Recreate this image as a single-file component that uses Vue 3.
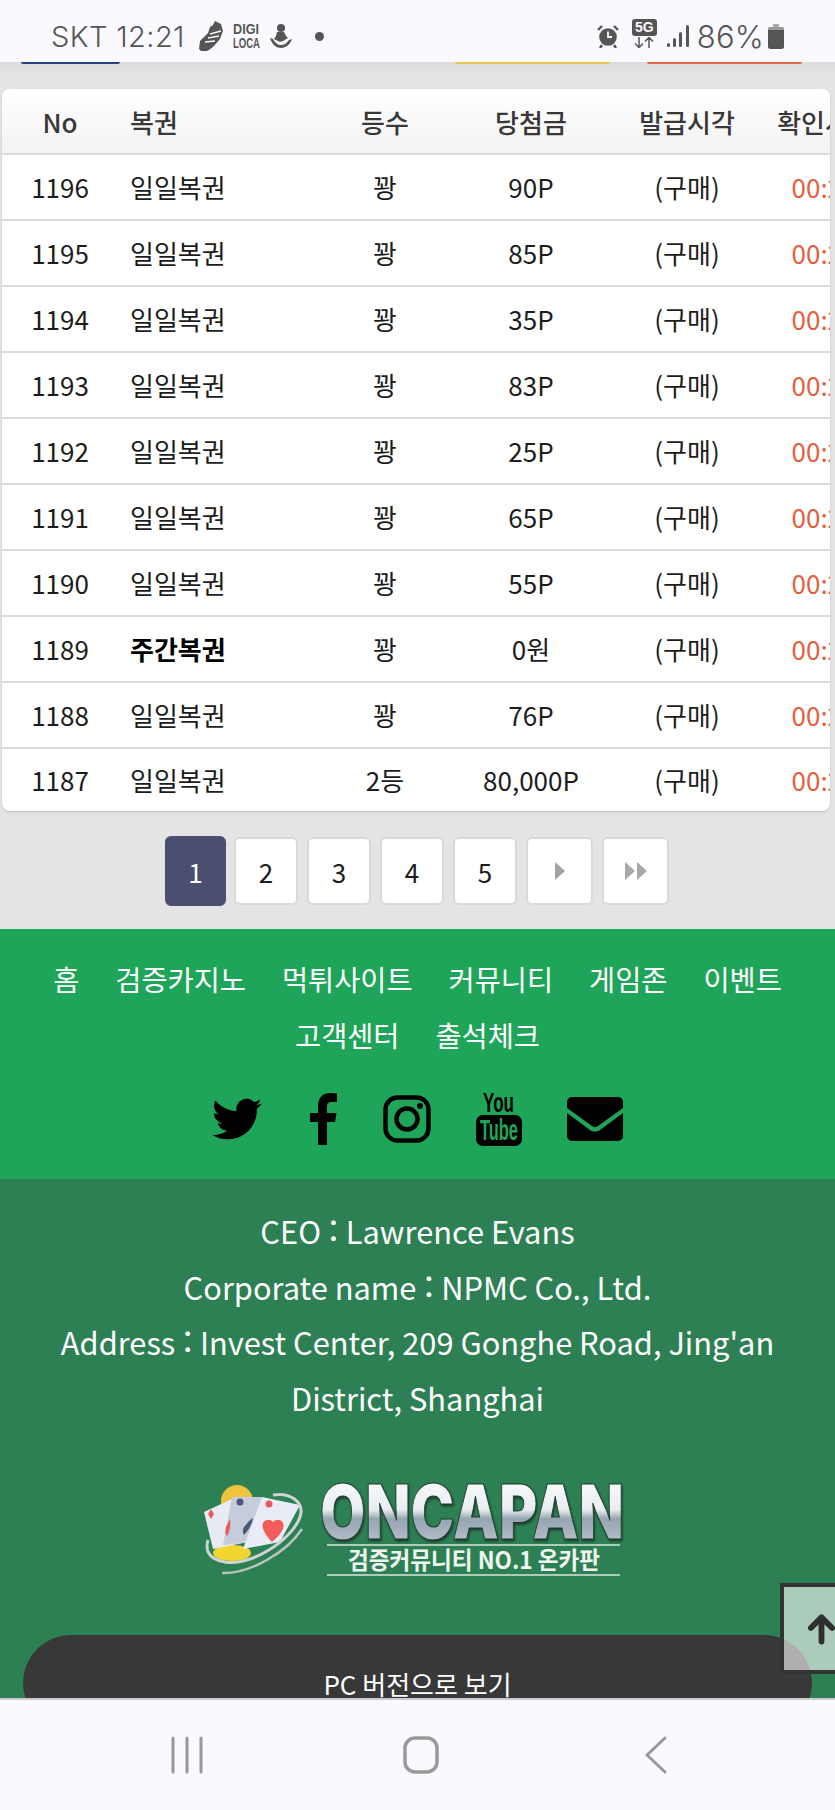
<script setup>
const rows = [
  { no: 1196, name: '일일복권', rank: '꽝', prize: '90P' },
  { no: 1195, name: '일일복권', rank: '꽝', prize: '85P' },
  { no: 1194, name: '일일복권', rank: '꽝', prize: '35P' },
  { no: 1193, name: '일일복권', rank: '꽝', prize: '83P' },
  { no: 1192, name: '일일복권', rank: '꽝', prize: '25P' },
  { no: 1191, name: '일일복권', rank: '꽝', prize: '65P' },
  { no: 1190, name: '일일복권', rank: '꽝', prize: '55P' },
  { no: 1189, name: '주간복권', rank: '꽝', prize: '0원', bold: true },
  { no: 1188, name: '일일복권', rank: '꽝', prize: '76P' },
  { no: 1187, name: '일일복권', rank: '2등', prize: '80,000P' }
]
const pages = [1, 2, 3, 4, 5]
const menu = ['홈', '검증카지노', '먹튀사이트', '커뮤니티', '게임존', '이벤트', '고객센터', '출석체크']
</script>

<template>
  <div class="phone">
    <div class="status">
      <div class="status-left">
        <span class="carrier">SKT 12:21</span>
        <svg viewBox="0 0 24 30" width="24" height="30">
          <path d="M16 0l6 3 2 7-3 8-6 7-5 4-2 1H2l-2-2 1-8 4-4 4-4 2-6 3-2z" fill="#555" />
          <path d="M11 13l11-3M9 17l11-2M6 21l10-1" stroke="#faf9fe" stroke-width="1.400" />
        </svg>
        <svg class="digi" viewBox="0 0 27 26" width="27" height="26">
          <text x="0" y="11" textLength="26" lengthAdjust="spacingAndGlyphs">DIGI</text>
          <text x="0" y="25" textLength="27" lengthAdjust="spacingAndGlyphs">LOCA</text>
        </svg>
        <svg viewBox="0 0 22 25" width="22" height="25">
          <circle cx="11" cy="4" r="4" fill="#555" />
          <path d="M7 8h7l2 4 2 2-5 3-3 1-6-3 2-3z" fill="#555" />
          <path d="M0 14c2 7 7 10 11 10s9-3 11-9l-3 1c-2 3-5 5-8 5s-6-2-8-6z" fill="#555" />
        </svg>
        <span class="dot"></span>
      </div>
      <div class="status-right">
        <svg class="alarm" viewBox="0 0 22 24" width="22" height="24">
          <circle cx="11" cy="13" r="8.800" fill="#555" />
          <path d="M11 7.500V13h4" stroke="#faf9fe" stroke-width="1.800" fill="none" />
          <path d="M1 6l4-4M21 6l-4-4M5 21l-2 3M17 21l2 3" stroke="#555" stroke-width="2.400" />
        </svg>
        <div class="fiveg">
          <span class="fiveg-box">5G</span>
          <svg viewBox="0 0 22 11" width="22" height="11">
            <path d="M6 0v10M2 6.500l4 4 4-4M16 11V1M12 4.500l4-4 4 4" stroke="#555" stroke-width="1.500" fill="none" />
          </svg>
        </div>
        <svg viewBox="0 0 22 24" width="22" height="24">
          <rect x="0" y="19" width="3" height="4" rx="1.500" fill="#555" />
          <rect x="6" y="14" width="3" height="9" rx="1.500" fill="#555" />
          <rect x="12" y="8" width="3" height="15" rx="1.500" fill="#555" />
          <rect x="19" y="1" width="3" height="22" rx="1.500" fill="#555" />
        </svg>
        <span class="battery-text">86%</span>
        <svg viewBox="0 0 16 25" width="16" height="25">
          <path d="M5 0h6v3H5z" fill="#aaa" />
          <rect x="0" y="3" width="16" height="22" rx="2.500" fill="#555" />
          <path d="M0 5.500a2.500 2.500 0 0 1 2.500-2.500h11a2.500 2.500 0 0 1 2.500 2.500V6H0z" fill="#999" />
        </svg>
      </div>
    </div>

    <div class="scroller">
      <div class="tabs-edge">
        <span class="edge blue"></span>
        <span class="edge yellow"></span>
        <span class="edge red"></span>
      </div>

      <div class="board">
        <div class="table-wrap">
          <table>
            <colgroup>
              <col class="c-no"><col class="c-name"><col class="c-rank"><col class="c-prize"><col class="c-issue"><col class="c-check">
            </colgroup>
            <thead>
              <tr>
                <th>No</th>
                <th class="left">복권</th>
                <th>등수</th>
                <th>당첨금</th>
                <th>발급시각</th>
                <th>확인시각</th>
              </tr>
            </thead>
            <tbody>
              <tr v-for="r in rows" :key="r.no">
                <td>{{ r.no }}</td>
                <td class="left" :class="{ bold: r.bold }">{{ r.name }}</td>
                <td>{{ r.rank }}</td>
                <td>{{ r.prize }}</td>
                <td>(구매)</td>
                <td class="time">00:21</td>
              </tr>
            </tbody>
          </table>
        </div>
      </div>

      <div class="pager">
        <a v-for="p in pages" :key="p" class="page" :class="{ active: p === 1 }">{{ p }}</a>
        <a class="page wide">
          <svg viewBox="0 0 10 18" width="10" height="18"><path d="M0 0l10 9-10 9z" fill="#a3a3a3" /></svg>
        </a>
        <a class="page wide">
          <svg viewBox="0 0 22 18" width="22" height="18"><path d="M0 0l10 9-10 9zM12 0l10 9-10 9z" fill="#a8a8a8" /></svg>
        </a>
      </div>

      <div class="foot-menu">
        <nav class="menu">
          <a v-for="m in menu" :key="m">{{ m }}</a>
        </nav>
        <div class="social">
          <svg viewBox="0 0 24 24" width="50" height="50"><path d="M23.950 4.570a10 10 0 0 1-2.820.770 4.960 4.960 0 0 0 2.160-2.720c-.950.550-2 .950-3.120 1.180a4.920 4.920 0 0 0-8.380 4.480C7.690 8.090 4.070 6.130 1.640 3.160a4.820 4.820 0 0 0-.67 2.480c0 1.710.87 3.210 2.190 4.100a4.900 4.900 0 0 1-2.230-.620v.060a4.920 4.920 0 0 0 3.950 4.830 5 5 0 0 1-2.210.080 4.940 4.940 0 0 0 4.610 3.420A9.870 9.870 0 0 1 0 19.540a14 14 0 0 0 7.560 2.210c9.050 0 14-7.500 14-13.980 0-.210 0-.420-.020-.630a9.900 9.900 0 0 0 2.410-2.570z" /></svg>
          <svg class="fb" viewBox="0 0 28 52" width="28" height="52"><path d="M8 52V29H0v-9h8v-7C8 4.500 13 0 20 0c3.500 0 6 .3 7 .4V9h-5c-4 0-5 2-5 5v6h9.500l-1.500 9h-8v23z" /></svg>
          <svg viewBox="0 0 48 48" width="48" height="48">
            <rect x="2.500" y="2.500" width="43" height="43" rx="12" fill="none" stroke="#000" stroke-width="4.500" />
            <circle cx="24" cy="24" r="10.500" fill="none" stroke="#000" stroke-width="4.500" />
            <circle cx="37" cy="11" r="3" />
          </svg>
          <svg class="yt" viewBox="0 0 46 55" width="46" height="55">
            <text x="7" y="21" textLength="31" lengthAdjust="spacingAndGlyphs" class="yt-you">You</text>
            <rect x="0" y="24" width="46" height="31" rx="7" />
            <text x="4" y="49" textLength="38" lengthAdjust="spacingAndGlyphs" class="yt-tube">Tube</text>
          </svg>
          <svg class="mail" viewBox="0 0 56 44" width="56" height="44">
            <path d="M5 0h46a5 5 0 0 1 5 5v6L31 29c-2 1.500-4 1.500-6 0L0 11V5a5 5 0 0 1 5-5z" />
            <path d="M0 16l23 17c3 2 7 2 10 0l23-17v23a5 5 0 0 1-5 5H5a5 5 0 0 1-5-5z" />
          </svg>
        </div>
      </div>

      <div class="foot-info">
        <p>CEO<span class="colon">：</span>Lawrence Evans</p>
        <p>Corporate name<span class="colon">：</span>NPMC Co., Ltd.</p>
        <p>Address<span class="colon">：</span>Invest Center, 209 Gonghe Road, Jing'an District, Shanghai</p>
        <svg class="logo" viewBox="0 0 425 96" width="425" height="96">
          <defs>
            <linearGradient id="metal" x1="0" y1="0" x2="0" y2="1">
              <stop offset="0" stop-color="#ffffff" />
              <stop offset="0.48" stop-color="#e9edf1" />
              <stop offset="0.58" stop-color="#96a5b2" />
              <stop offset="1" stop-color="#c6ced6" />
            </linearGradient>
          </defs>
          <circle cx="37" cy="19" r="16" fill="#efc33c" />
          <ellipse cx="32" cy="71" rx="19" ry="8" fill="#f3d52f" />
          <path d="M4 30l28-13 16 43-35 7z" fill="#e8ebf4" />
          <path d="M32 15h30L52 60l-29 3z" fill="#c5ccdb" />
          <path d="M62 15l38 8-20 37-37 7z" fill="#e9ecf5" />
          <path d="M63 41c3-4 7-4 10-1 3-3 8-3 10 1 2 6-3 12-11 19-5-5-11-13-9-19z" fill="#f45c5c" />
          <path d="M11 27l3 5-3 5-3-5z" fill="#e85a5a" />
          <path d="M30 37c1 5 0 12-3 17-2-2-2-5-1-9z" fill="#e85a5a" />
          <path d="M44 45c3-3 6-8 9-9-1 7-5 13-9 17-2-3-1-6 0-8z" fill="#4a5778" />
          <circle cx="40" cy="20" r="3.500" fill="#4a5778" />
          <circle cx="69" cy="22" r="3.500" fill="#e85a5a" />
          <path d="M73 13c17-3 32 7 27 22-8 23-50 50-75 45C8 77 5 68 8 58" fill="none" stroke="#cfd3d2" stroke-width="3" />
          <path d="M102 47C87 70 50 92 22 91" fill="none" stroke="#b9c5bd" stroke-width="2.500" />
          <text x="120" y="57" textLength="304" lengthAdjust="spacingAndGlyphs" class="logo-name" fill="url(#metal)">ONCAPAN</text>
          <line x1="127" y1="63" x2="420" y2="63" stroke="#d9e6dc" stroke-width="1.500" />
          <text x="148" y="87" textLength="252" lengthAdjust="spacingAndGlyphs" class="logo-sub">검증커뮤니티 NO.1 온카판</text>
          <line x1="127" y1="93" x2="420" y2="93" stroke="#d9e6dc" stroke-width="1.500" />
        </svg>
        <button class="pc-btn">PC 버전으로 보기</button>
      </div>

      <a class="to-top">
        <svg viewBox="0 0 30 32" width="30" height="32">
          <path d="M15 29V4M4 15L15 4l11 11" fill="none" stroke="#2f2f2f" stroke-width="6" stroke-linecap="round" stroke-linejoin="round" />
        </svg>
      </a>
    </div>

    <div class="navbar">
      <svg viewBox="0 0 34 38" width="34" height="38"><path d="M3 2v34M17 2v34M31 2v34" stroke="#999" stroke-width="3" stroke-linecap="round" /></svg>
      <svg class="home" viewBox="0 0 36 38" width="36" height="38"><rect x="2" y="2" width="32" height="34" rx="10" fill="none" stroke="#999" stroke-width="3.500" /></svg>
      <svg viewBox="0 0 24 38" width="24" height="38"><path d="M21 2L3 19l18 17" fill="none" stroke="#999" stroke-width="3" stroke-linecap="round" stroke-linejoin="round" /></svg>
    </div>
  </div>
</template>

<style>
html, body {
  margin: 0;
  background: #e4e4e4;
}
</style>

<style scoped>
.phone {
  width: 835px;
  height: 1810px;
  display: flex;
  flex-direction: column;
  overflow: hidden;
  font-family: "Noto Sans CJK KR", "Noto Sans", sans-serif;
}

/* status bar */
.status {
  height: 62px;
  flex: none;
  box-sizing: border-box;
  padding: 14px 0 0 51px;
  background: #faf9fe;
  display: flex;
  justify-content: space-between;
  color: #555;
}
.status-left, .status-right {
  display: flex;
  align-items: center;
  height: 52px;
  margin-top: -4px;
}
.status-left {
  gap: 10px;
}
.carrier, .battery-text {
  font-family: Inter, sans-serif;
  font-size: 29px;
  font-weight: 300;
  letter-spacing: 0.400px;
}
.carrier {
  margin-right: 4px;
}
.digi {
  overflow: visible;
}
.digi text {
  font-family: "Liberation Sans", sans-serif;
  font-weight: 700;
  font-size: 14px;
  fill: #555;
}
.dot {
  width: 9px;
  height: 9px;
  border-radius: 50%;
  background: #555;
  margin-left: 13px;
}
.status-right {
  padding-right: 51px;
  gap: 10px;
}
.alarm {
  margin-right: 3px;
}
.fiveg {
  display: flex;
  flex-direction: column;
  align-items: center;
  gap: 1px;
  margin-top: -5px;
}
.fiveg-box {
  background: #555;
  color: #faf9fe;
  font-family: "Liberation Sans", sans-serif;
  font-weight: 700;
  font-size: 14px;
  line-height: 17px;
  padding: 0 3px;
  border-radius: 3px;
}
.battery-text {
  font-size: 31px;
  letter-spacing: 0.200px;
  margin: 0 -6px 0 -2px;
}

/* page */
.scroller {
  flex: 1;
  min-height: 0;
  position: relative;
  overflow: hidden;
  background: linear-gradient(#dcdcdc, #e4e4e4 14px);
}
.tabs-edge {
  height: 2px;
  display: flex;
  margin-bottom: 25px;
}
.edge {
  height: 2px;
  border-radius: 0 0 2px 2px;
}
.blue { width: 99px; margin-left: 21px; background: #23427f; }
.yellow { width: 155px; margin-left: 335px; background: #e6c44a; }
.red { width: 155px; margin-left: 37px; background: #e2674a; }

.board {
  padding: 0 5px 0 2px;
}
.table-wrap {
  overflow: hidden;
  background: #fff;
  border-radius: 8px;
  box-shadow: 0 1px 2px rgba(0, 0, 0, 0.18);
}
table {
  width: 878px;
  table-layout: fixed;
  border-collapse: separate;
  border-spacing: 0;
  font-size: 26px;
  color: #1c1c1c;
}
.c-no { width: 116px; }
.c-name { width: 194px; }
.c-rank { width: 146px; }
.c-prize { width: 146px; }
.c-issue { width: 166px; }
.c-check { width: 110px; }
th, td {
  height: 66px;
  box-sizing: border-box;
  padding: 0;
  text-align: center;
  white-space: nowrap;
  border-bottom: 2px solid #dcdcdc;
}
td {
  padding-bottom: 2px;
}
th {
  font-weight: 500;
  color: #383838;
  background: linear-gradient(#fff, #f3f3f3);
}
tbody tr:last-child td {
  height: 62px;
  border-bottom: none;
}
th.left, td.left {
  text-align: left;
  padding-left: 12px;
}
.bold {
  font-weight: 700;
  color: #000;
}
td.time {
  color: #e5603c;
  padding-right: 2px;
}

/* pagination */
.pager {
  display: flex;
  justify-content: center;
  align-items: center;
  gap: 9px;
  padding: 25px 1px 23px 0;
}
.page {
  width: 64px;
  height: 68px;
  box-sizing: border-box;
  display: flex;
  align-items: center;
  justify-content: center;
  background: #fff;
  border: 2px solid #d9d9d9;
  border-radius: 6px;
  font-size: 26px;
  color: #1c1c1c;
}
.page.active {
  width: 61px;
  height: 70px;
  margin-right: -1px;
  background: #4a4e6f;
  border-color: #4a4e6f;
  color: #fff;
}
.page.wide {
  width: 67px;
}

/* footer */
.foot-menu {
  height: 250px;
  box-sizing: border-box;
  background: #1fa55a;
  padding-top: 22px;
}
.menu {
  display: flex;
  flex-wrap: wrap;
  justify-content: center;
  column-gap: 36px;
  font-size: 28.400px;
  line-height: 55.500px;
  color: #fff;
  padding: 0 20px;
}
.social {
  display: flex;
  justify-content: center;
  align-items: center;
  gap: 46px;
  margin-top: 29px;
}
.fb {
  margin: 0 -1px 0 2px;
}
.yt {
  margin-left: -1px;
}
.mail {
  margin-left: -1px;
}
.yt-you, .yt-tube {
  font-family: "Liberation Sans", sans-serif;
  font-weight: 700;
}
.yt-you {
  font-size: 28px;
}
.yt-tube {
  font-size: 29px;
  fill: #1fa55a;
}

.foot-info {
  background: #2d8053;
  padding: 24px 40px 0;
  text-align: center;
  color: #fff;
  font-size: 30.800px;
  line-height: 55.500px;
  height: 560px;
  box-sizing: border-box;
}
.foot-info p {
  margin: 0;
}
.colon {
  vertical-align: 2px;
  line-height: 1;
  margin: 0 -3px;
}
.logo {
  display: block;
  margin: 57px 0 0 160px;
}
.logo-name {
  font-family: Inter, "Liberation Sans", sans-serif;
  font-weight: 900;
  font-size: 75px;
  stroke: #1c3a2a;
  stroke-width: 1px;
  filter: drop-shadow(1px 2px 1px #1f3f2d);
}
.logo-sub {
  font-family: "Noto Sans CJK KR", sans-serif;
  font-weight: 700;
  font-size: 24px;
  fill: #f0f5f0;
}
.pc-btn {
  display: block;
  width: 789px;
  height: 96px;
  margin: 57px 0 0 -17px;
  border: none;
  border-radius: 50px;
  background: #383838;
  color: #fff;
  font-family: inherit;
  font-size: 26px;
}

.to-top {
  position: absolute;
  left: 780px;
  top: 1521px;
  width: 60px;
  height: 91px;
  box-sizing: border-box;
  border: 4px solid #333;
  background: rgba(255, 255, 255, 0.6);
  display: flex;
  align-items: center;
  padding-left: 23px;
}

/* android nav */
.navbar {
  height: 112px;
  flex: none;
  box-sizing: border-box;
  border-top: 2px solid #c9c9cd;
  background: #faf9fe;
  display: flex;
  align-items: center;
  justify-content: center;
  padding-left: 3px;
  gap: 199px;
}
.home {
  margin-right: 6px;
}
</style>
